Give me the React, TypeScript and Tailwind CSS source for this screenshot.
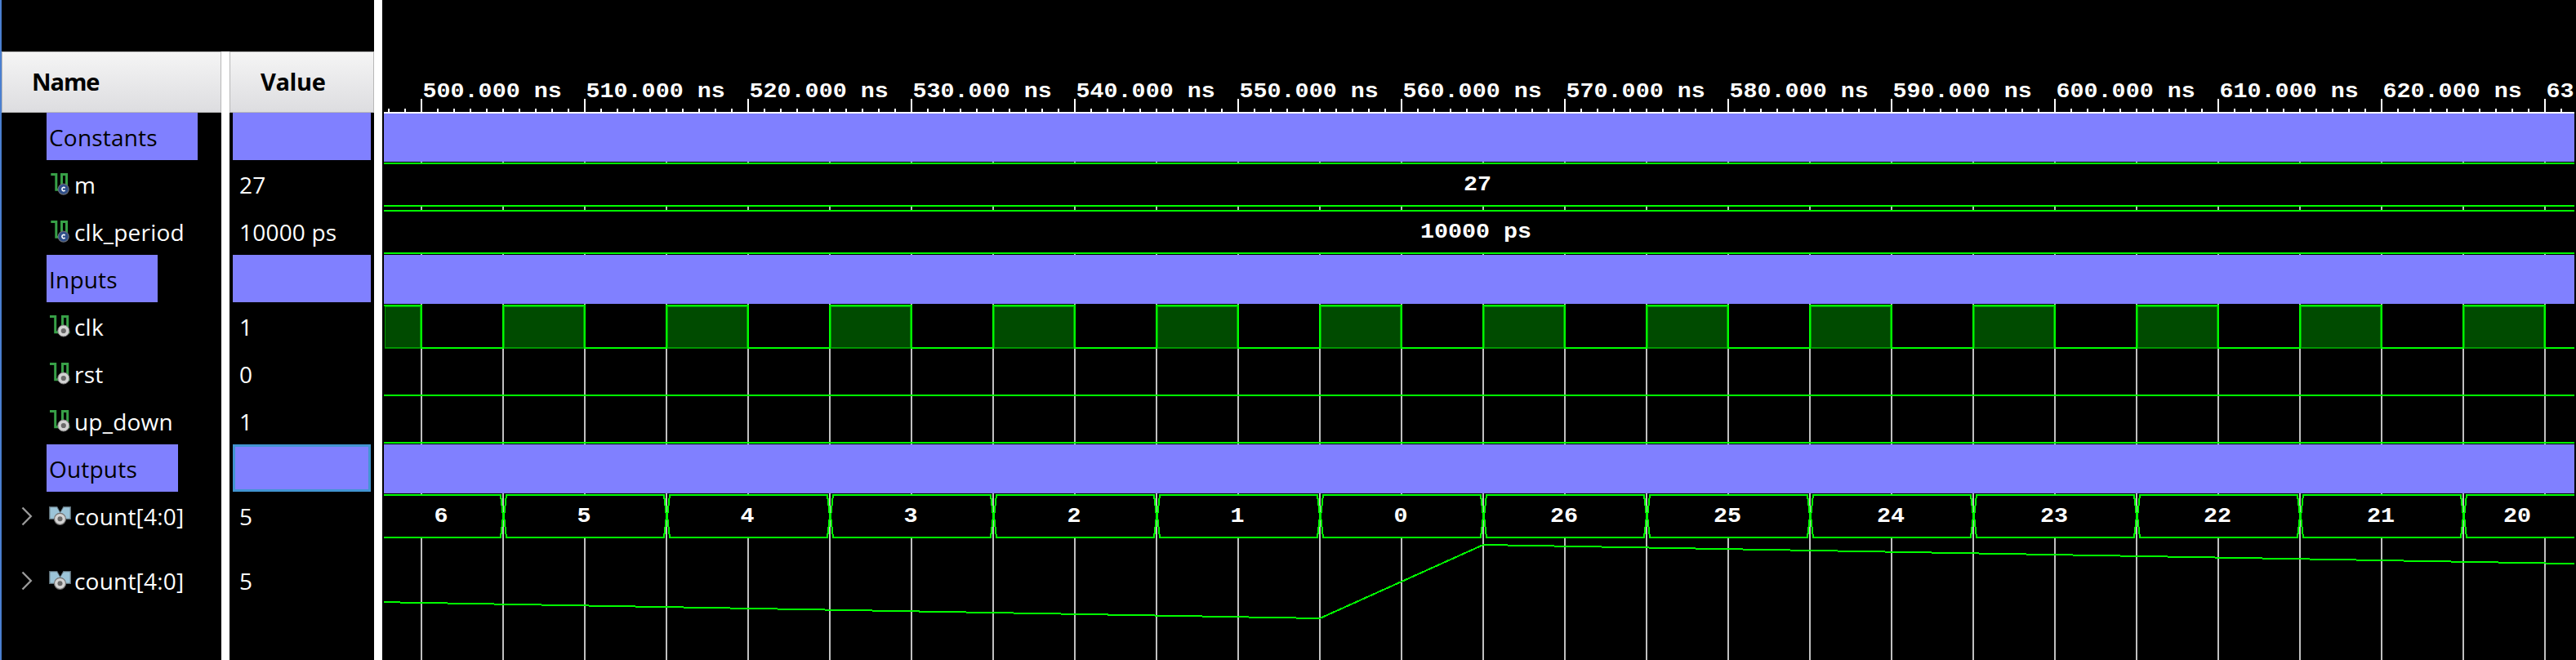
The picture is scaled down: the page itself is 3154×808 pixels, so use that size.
import React from "react";

const GREEN = "#00ff00";
const PURPLE = "#8080ff";
const GRID = "#c0c0c0";
const LEFT = 470;
const RIGHT = 3152;

type Kind = "const" | "signal" | "bus" | "group";
type Row = { kind: Kind; name: string; value?: string; width?: string; tall?: boolean; active?: boolean };

const rows: Row[] = [
  { kind: "group", name: "Constants", width: "w-[185px]" },
  { kind: "const", name: "m", value: "27" },
  { kind: "const", name: "clk_period", value: "10000 ps" },
  { kind: "group", name: "Inputs", width: "w-[136px]" },
  { kind: "signal", name: "clk", value: "1" },
  { kind: "signal", name: "rst", value: "0" },
  { kind: "signal", name: "up_down", value: "1" },
  { kind: "group", name: "Outputs", width: "w-[161px]", active: true },
  { kind: "bus", name: "count[4:0]", value: "5" },
  { kind: "bus", name: "count[4:0]", value: "5", tall: true },
];

function ScalarIcon({ constant }: { constant: boolean }) {
  return (
    <svg width="30" height="30" viewBox="0 0 30 30" className="shrink-0">
      <path
        d={constant ? "M2.3 3.5H8.8V22.3H15.5V3.5H21.5V18" : "M1 3.5H7.7V22.8H16.5V3.5H22.7V22.8H25.5"}
        fill="none"
        stroke="#37a047"
        strokeWidth="3"
      />
      {constant ? (
        <>
          <circle cx="17.7" cy="21.7" r="6.5" fill="#2f4f8a" stroke="#666b75" strokeWidth="1.2" />
          <path d="M19.6 20.2C18.4 18.8 15.9 19.3 15.9 21.6C15.9 23.9 18.4 24.3 19.6 23" fill="none" stroke="#fff" strokeWidth="1.6" />
        </>
      ) : (
        <>
          <circle cx="17.8" cy="21" r="7" fill="#d2d2d2" stroke="#808080" strokeWidth="1" />
          <circle cx="17.8" cy="21" r="3.1" fill="#6a6a6a" />
        </>
      )}
    </svg>
  );
}

function BusIcon() {
  return (
    <svg width="30" height="30" viewBox="0 0 30 30" className="shrink-0">
      <path d="M0.7 3.7H10L13.7 10L17.5 3.7H26.3V18.3H0.7Z" fill="#9cc4d8" stroke="#5e6f78" strokeWidth="1.3" />
      <path d="M10.3 3L13.7 9.5L17.2 3Z" fill="#000" />
      <circle cx="13.5" cy="18.3" r="7" fill="#d2d2d2" stroke="#707070" strokeWidth="1.2" />
      <circle cx="13.5" cy="18.3" r="3" fill="#6a6a6a" />
    </svg>
  );
}

function NameCell({ row }: { row: Row }) {
  if (row.kind === "group") {
    return (
      <div className={"ml-[55px] h-[58px] bg-[#8080ff] pt-[10px] pl-[3px] text-black " + row.width}>
        <span className="block leading-[40px]">{row.name}</span>
      </div>
    );
  }
  return (
    <div className={"flex items-start text-white " + (row.tall ? "h-[148px] pt-[31px]" : "h-[58px] pt-[10px]")}>
      <div className="w-[58px] pt-[8px] pl-[24px]">
        {row.kind === "bus" && (
          <svg width="16" height="24" viewBox="0 0 16 24" fill="none" stroke="#999" strokeWidth="2.4">
            <path d="M1.5 1.5L11.8 12L1.5 22.5" />
          </svg>
        )}
      </div>
      <div className={"w-[31px] " + (row.kind === "bus" ? "pt-[5px]" : "pt-[4px]")}>
        {row.kind === "bus" ? <BusIcon /> : <ScalarIcon constant={row.kind === "const"} />}
      </div>
      <span className="leading-[40px]">{row.name}</span>
    </div>
  );
}

function ValueCell({ row }: { row: Row }) {
  if (row.kind === "group") {
    return (
      <div
        className={
          "ml-[4px] h-[58px] w-[169px] bg-[#8080ff] " + (row.active ? "border-[3px] border-[#4294d2]" : "")
        }
      />
    );
  }
  return (
    <div className={"pl-[12px] text-white " + (row.tall ? "h-[148px] pt-[31px]" : "h-[58px] pt-[10px]")}>
      <span className="block leading-[40px]">{row.value}</span>
    </div>
  );
}

function Label({ x, y, children, anchor = "middle" }: { x: number; y: number; children: string; anchor?: "start" | "middle" }) {
  return (
    <text transform={`translate(${x} ${y}) scale(1 0.92)`} textAnchor={anchor} fill="#fff" fontSize="28.4" fontWeight="700">
      {children}
    </text>
  );
}

const gridXs = Array.from({ length: 27 }, (_, i) => 515 + i * 100);
const minorXs = Array.from({ length: 134 }, (_, i) => 475 + i * 20);
const clkHigh: [number, number][] = [[LEFT, 516], ...Array.from({ length: 13 }, (_, i): [number, number] => [616 + i * 200, 716 + i * 200])];
const counts = [6, 5, 4, 3, 2, 1, 0, 26, 25, 24, 23, 22, 21, 20];

function HLine({ y }: { y: number }) {
  return <rect x={LEFT} y={y} width={RIGHT - LEFT} height="2" fill={GREEN} />;
}

function BusSegment({ index, value }: { index: number; value: number }) {
  const last = counts.length - 1;
  const start = 416 + index * 200;
  const end = start + 200;
  const cx = index === 0 ? 540 : index === last ? 3082 : start + 99;
  const left = index === 0 ? `M${LEFT - 10} 606` : `M${start + 1} 632L${start + 4} 606`;
  const right = index === last ? `H${RIGHT + 10}V658` : `H${end - 3}L${end} 632L${end - 3} 658`;
  const close = index === 0 ? `H${LEFT - 10}Z` : `H${start + 4}Z`;
  return (
    <g>
      <path d={left + right + close} fill="#000" stroke={GREEN} strokeWidth="2" />
      <Label x={cx} y={639}>{String(value)}</Label>
    </g>
  );
}

function Waveform() {
  const level = (v: number) => 757 - (v * 90) / 26;
  const analog = [...counts, 19].map((v, i) => `${416 + i * 200},${level(v)}`).join(" ");
  return (
    <svg
      width="2684"
      height="808"
      viewBox={`${LEFT} 0 2684 808`}
      className="ml-[2px] block font-['Liberation_Mono',monospace] tracking-normal"
      shapeRendering="crispEdges"
    >
      <defs>
        <clipPath id="plot">
          <rect x={LEFT} y="0" width={RIGHT - LEFT} height="808" />
        </clipPath>
      </defs>
      <g clipPath="url(#plot)">
        {gridXs.map((x) => (
          <rect key={x} x={x} y="139" width="2" height="669" fill={GRID} />
        ))}

        <rect x={LEFT} y="137" width={RIGHT - LEFT} height="2" fill="#fff" />
        {minorXs.map((x) => (
          <rect key={x} x={x} y="133" width="2" height="4" fill="#fff" />
        ))}
        {Array.from({ length: 14 }, (_, i) => (
          <g key={i}>
            <rect x={515 + i * 200} y="121" width="2" height="16" fill="#fff" />
            <Label x={517.5 + i * 200} y={119} anchor="start">{i === 13 ? "63" : `${500 + i * 10}.000 ns`}</Label>
          </g>
        ))}

        <rect x={LEFT} y="139" width={RIGHT - LEFT} height="59" fill={PURPLE} />
        <rect x={LEFT} y="312" width={RIGHT - LEFT} height="60" fill={PURPLE} />
        <rect x={LEFT} y="544" width={RIGHT - LEFT} height="60" fill={PURPLE} />

        <rect x={LEFT} y="199" width={RIGHT - LEFT} height="54" fill="#000" />
        <rect x={LEFT} y="257" width={RIGHT - LEFT} height="54" fill="#000" />
        <HLine y={199} />
        <HLine y={251} />
        <HLine y={257} />
        <HLine y={309} />
        <Label x={1809} y={233}>27</Label>
        <Label x={1807} y={291}>10000 ps</Label>

        <HLine y={425} />
        {clkHigh.map(([a, b]) => (
          <g key={a}>
            <rect x={a + 1} y="375" width={b - a - 2} height="52" fill="#008200" />
            <rect x={a + 1} y="375" width={b - a - 1} height="51" fill="#00a000" />
            <rect x={a + 2} y="376" width={b - a - 4} height="49" fill="#004b00" />
            <rect x={a === LEFT ? a : a - 1} y="373" width={a === LEFT ? 47 : 102} height="2" fill={GREEN} />
            {a === LEFT && <rect x={a} y="375" width="1" height="52" fill="#000" />}
            {a !== LEFT && <rect x={a - 1} y="373" width="2" height="54" fill={GREEN} />}
            <rect x={b - 1} y="373" width="2" height="54" fill={GREEN} />
          </g>
        ))}
        <HLine y={483} />
        <HLine y={541} />

        {counts.map((value, index) => (
          <BusSegment key={index} index={index} value={value} />
        ))}

        <polyline points={analog} fill="none" stroke={GREEN} strokeWidth="2" />
      </g>
    </svg>
  );
}

function HeaderCell({ title, className }: { title: string; className: string }) {
  return (
    <div
      className={
        "h-[75px] border border-[#b8b8b8] bg-linear-to-b from-[#f5f5f5] to-[#dddde0] pt-[16px] text-[29px] leading-[40px] font-bold text-black " +
        className
      }
    >
      {title}
    </div>
  );
}

export default function App() {
  return (
    <div className="flex h-[808px] w-[3154px] overflow-hidden bg-black font-['Open_Sans',sans-serif] text-[28px] tracking-[0.2px]">
      <div className="w-[2px] shrink-0 bg-[#4a7fd0]" />
      <div className="flex w-[456px] shrink-0 pt-[63px]">
        <div className="w-[269px] shrink-0">
          <HeaderCell title="Name" className="pl-[36px] tracking-[-1.1px]" />
          {rows.map((row, i) => (
            <NameCell key={i} row={row} />
          ))}
        </div>
        <div className="w-[10px] shrink-0 bg-white" />
        <div className="w-[177px] shrink-0">
          <HeaderCell title="Value" className="pl-[37px] tracking-[-0.4px]" />
          {rows.map((row, i) => (
            <ValueCell key={i} row={row} />
          ))}
        </div>
      </div>
      <div className="w-[10px] shrink-0 bg-white" />
      <div className="shrink-0">
        <Waveform />
      </div>
    </div>
  );
}
